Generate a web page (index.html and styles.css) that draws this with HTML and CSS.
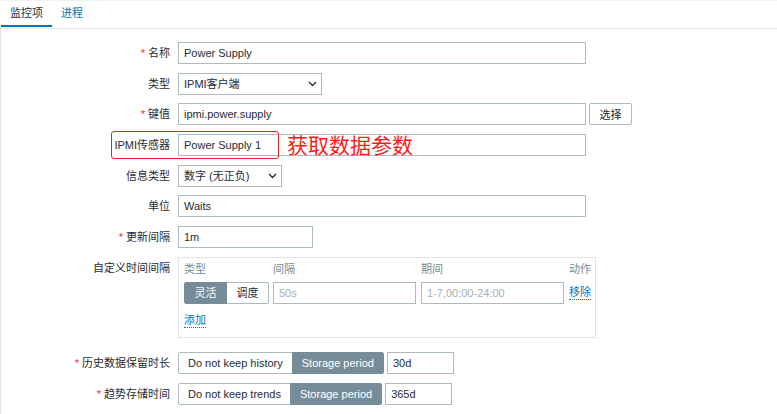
FILE: index.html
```html
<!DOCTYPE html>
<html lang="zh">
<head>
<meta charset="utf-8">
<title>监控项</title>
<link rel="stylesheet" href="styles.css">
</head>
<body>
<div class="page">
  <nav class="tabs">
    <a class="tab active">监控项</a>
    <a class="tab">进程</a>
  </nav>
  <div class="content">
    <div class="form">
      <div class="row">
        <div class="lbl req">名称</div>
        <div class="input w-wide">Power Supply</div>
      </div>
      <div class="row">
        <div class="lbl">类型</div>
        <div class="input select w-type"><span>IPMI客户端</span><svg class="chev" width="9" height="6" viewBox="0 0 9 6"><path d="M1 1l3.5 3.5L8 1" fill="none" stroke="#1f2c33" stroke-width="1.3"/></svg></div>
      </div>
      <div class="row">
        <div class="lbl req">键值</div>
        <div class="input w-wide">ipmi.power.supply</div>
        <button class="btn">选择</button>
      </div>
      <div class="row">
        <div class="lbl">IPMI传感器</div>
        <div class="input w-wide">Power Supply 1</div>
        <div class="mark-box"></div>
        <div class="mark-text">获取数据参数</div>
      </div>
      <div class="row">
        <div class="lbl">信息类型</div>
        <div class="input select w-info"><span>数字 (无正负)</span><svg class="chev" width="9" height="6" viewBox="0 0 9 6"><path d="M1 1l3.5 3.5L8 1" fill="none" stroke="#1f2c33" stroke-width="1.3"/></svg></div>
      </div>
      <div class="row">
        <div class="lbl">单位</div>
        <div class="input w-wide">Waits</div>
      </div>
      <div class="row">
        <div class="lbl req">更新间隔</div>
        <div class="input w-delay">1m</div>
      </div>
      <div class="row">
        <div class="lbl">自定义时间间隔</div>
        <div class="intervals">
          <div class="itable">
            <div class="ih">类型</div>
            <div class="ih">间隔</div>
            <div class="ih">期间</div>
            <div class="ih">动作</div>
            <div class="toggle small">
              <span class="tbtn on">灵活</span><span class="tbtn">调度</span>
            </div>
            <div class="input w-int ph">50s</div>
            <div class="input w-int ph">1-7,00:00-24:00</div>
            <a class="link">移除</a>
          </div>
          <a class="link add">添加</a>
        </div>
      </div>
      <div class="row history">
        <div class="lbl req">历史数据保留时长</div>
        <div class="toggle">
          <span class="tbtn">Do not keep history</span><span class="tbtn on">Storage period</span>
        </div>
        <div class="input w-period">30d</div>
      </div>
      <div class="row trends">
        <div class="lbl req">趋势存储时间</div>
        <div class="toggle">
          <span class="tbtn">Do not keep trends</span><span class="tbtn on">Storage period</span>
        </div>
        <div class="input w-period">365d</div>
      </div>
    </div>
  </div>
</div>
</body>
</html>
```

FILE: styles.css
```css
html, body {
  margin: 0;
  background: #fff;
}
body {
  font: 11px "Liberation Sans", "Noto Sans CJK SC", sans-serif;
  color: #1f2c33;
}
.page {
  height: 413px;
  border-top: 1px solid #eef1f3;
  display: flex;
  flex-direction: column;
}
.tabs {
  display: flex;
  padding-left: 1px;
  padding-bottom: 1px;
  border-bottom: 1px solid #dfe4e7;
}
.tab {
  padding: 0 9px;
  line-height: 24px;
  border-bottom: 2px solid transparent;
  color: #0275b8;
  text-decoration: none;
}
.tab.active {
  color: #1f2c33;
  border-bottom-color: #0275b8;
}
.content {
  flex: 1;
  border-left: 1px solid #dfe4e7;
  padding-top: 13px;
}
.form {
  display: flex;
  flex-direction: column;
  gap: 8.67px;
}
.row {
  display: flex;
  align-items: flex-start;
  position: relative;
}
.lbl {
  width: 169px;
  flex: none;
  margin-right: 8px;
  text-align: right;
  line-height: 22px;
  white-space: nowrap;
}
.req::before {
  content: "*";
  color: #e33734;
  margin-right: 3px;
}
.input {
  box-sizing: border-box;
  height: 22px;
  border: 1px solid #acbbc2;
  padding: 0 5px;
  line-height: 20px;
  background: #fff;
  white-space: nowrap;
  flex: none;
}
.ph {
  color: #a3afb6;
}
.w-wide { width: 408px; }
.w-type { width: 144px; }
.w-info { width: 104px; }
.w-delay { width: 135px; }
.w-int { width: 143px; }
.w-period { width: 67px; margin-left: 3px; }
.select {
  display: flex;
  align-items: center;
  justify-content: space-between;
  padding-right: 4px;
}
.chev {
  flex: none;
}
.btn {
  box-sizing: border-box;
  height: 22px;
  width: 43px;
  margin-left: 3px;
  border: 1px solid #acbbc2;
  border-radius: 2px;
  background: #fff;
  font: inherit;
  color: #1f2c33;
  padding: 0;
}
.mark-box {
  position: absolute;
  left: 110px;
  top: -3px;
  width: 168px;
  height: 28px;
  box-sizing: border-box;
  border: 1px solid #f02020;
  border-radius: 3px;
}
.mark-text {
  position: absolute;
  left: 286px;
  top: -1px;
  font: 21px/22px "Noto Sans CJK SC", sans-serif;
  color: #ff1a1a;
  white-space: nowrap;
}
.intervals {
  box-sizing: border-box;
  width: 418px;
  border: 1px solid #dfe4e7;
  padding: 0 0 9px 5px;
}
.itable {
  display: grid;
  grid-template-columns: 89px 148px 148px auto;
  grid-template-rows: 22px 22px;
  row-gap: 2px;
  align-items: center;
}
.ih {
  color: #768d99;
  line-height: 22px;
  white-space: nowrap;
}
.toggle {
  display: flex;
  flex: none;
}
.tbtn {
  box-sizing: border-box;
  height: 22px;
  line-height: 20px;
  padding: 0 9px;
  border: 1px solid #acbbc2;
  background: #fff;
  color: #1f2c33;
  white-space: nowrap;
}
.small .tbtn {
  padding: 0 9.5px;
}
.tbtn + .tbtn {
  margin-left: -1px;
}
.tbtn:first-child {
  border-radius: 2px 0 0 2px;
}
.tbtn:last-child {
  border-radius: 0 2px 2px 0;
}
.tbtn.on {
  background: #768d99;
  border-color: #768d99;
  color: #fff;
  position: relative;
}
.link {
  color: #0275b8;
  border-bottom: 1px dotted #0275b8;
  line-height: 14px;
  justify-self: start;
  text-decoration: none;
  white-space: nowrap;
}
.add {
  display: inline-block;
  margin-top: 9px;
}
.history {
  margin-top: 6px;
}
```
